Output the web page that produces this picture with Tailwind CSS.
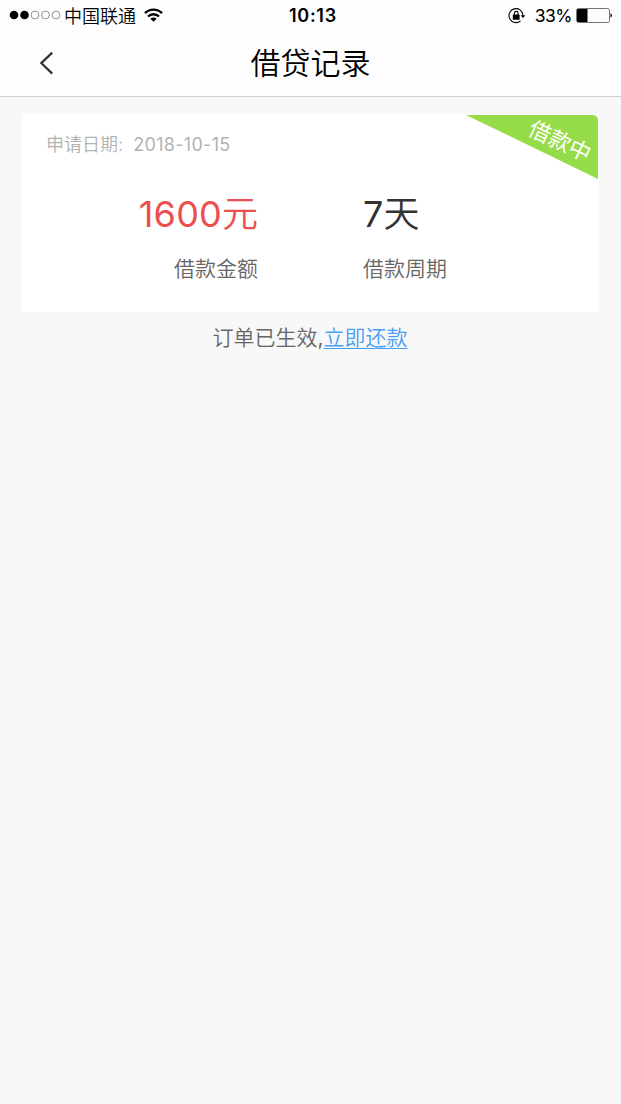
<!DOCTYPE html>
<html lang="zh-CN">
<head>
    <meta charset="UTF-8">
    <meta name="viewport" content="width=device-width, initial-scale=1.0">
    <title>借贷记录</title>
    <script src="https://cdn.jsdelivr.net/npm/@tailwindcss/browser@4"></script>
    <style>
        body { font-family: 'Inter', 'Noto Sans CJK SC', sans-serif; }
    </style>
</head>
<body class="bg-[#f8f8f8] min-h-screen overflow-hidden">

    <header class="h-[97px] bg-[#fdfdfd] border-b border-[#cfcfcf] text-black">
        <!-- Status bar -->
        <div class="relative h-8 flex items-center justify-between pl-[9px] pr-2">
            <div class="flex items-center">
                <svg class="w-[52px] h-[10px] -mt-0.5" viewBox="0 0 52 10" fill="none" stroke="#777" stroke-width="0.8">
                    <circle cx="5" cy="5" r="4.3" fill="#000" stroke="none"/>
                    <circle cx="15.5" cy="5" r="4.3" fill="#000" stroke="none"/>
                    <circle cx="26" cy="5" r="3.9"/>
                    <circle cx="36.5" cy="5" r="3.9"/>
                    <circle cx="47" cy="5" r="3.9"/>
                </svg>
                <span class="ml-[3px] mt-px text-[18px] leading-8 font-[350] whitespace-nowrap">中国联通</span>
                <svg class="ml-2 -mt-0.5 w-[19px] h-[14px]" viewBox="0 0 19 14" fill="none" stroke="#000" stroke-width="2.3">
                    <path d="M1 5.1a12 12 0 0 1 17 0"/>
                    <path d="M4 8.5a7.8 7.8 0 0 1 11 0"/>
                    <path d="M9.5 13.8 6.3 10.8a4.4 4.4 0 0 1 6.4 0z" fill="#000" stroke="none"/>
                </svg>
            </div>
            <span class="absolute left-[289px] top-0 text-[18px] leading-8 font-semibold tracking-[0.7px]">10:13</span>
            <div class="flex items-center">
                <svg class="-mt-px w-[18px] h-[16px]" viewBox="0 0 18 16" fill="none" stroke="#000" stroke-width="1.1">
                    <path d="M12.6 12.9A7 7 0 1 1 15 7.2"/>
                    <path d="M12.6 7.2h4.8L15 10.1z" fill="#000" stroke="none"/>
                    <rect x="4.8" y="6.6" width="6.8" height="5.2" rx="0.6" fill="#000" stroke="none"/>
                    <path d="M6.3 7.2V5.3a1.9 1.9 0 0 1 3.8 0v1.9"/>
                </svg>
                <span class="ml-[9px] text-[17.5px] leading-8 tracking-[-0.5px]">33%</span>
                <svg class="ml-1 -mt-px w-[37px] h-[15px]" viewBox="0 0 37 15">
                    <rect x="0.5" y="0.5" width="33" height="14" rx="2" fill="none" stroke="#666" stroke-width="0.9"/>
                    <path d="M2 1h9.5v13H2a1 1 0 0 1-1-1V2a1 1 0 0 1 1-1z" fill="#000"/>
                    <path d="M34.5 5.3a2.4 2.4 0 0 1 0 4.4z" fill="#000"/>
                </svg>
            </div>
        </div>
        <!-- Nav bar -->
        <div class="relative h-16 flex justify-center">
            <button class="absolute left-[39px] top-[19px]" aria-label="返回">
                <svg class="w-[15px] h-[24px]" viewBox="0 0 15 24" fill="none" stroke="#333" stroke-width="2.2">
                    <path d="M13.2 1.6 2.3 12.1 13.2 22.6"/>
                </svg>
            </button>
            <h1 class="text-[30px] leading-[62px] font-[350]">借贷记录</h1>
        </div>
    </header>

    <main class="pt-[17px] pl-[22px] pr-[22px]">
        <section class="relative h-[198px] bg-white pt-[19px]">
            <p class="pl-6 text-[18px] leading-6 text-[#b2b2b2] font-[350] whitespace-pre">申请日期:  <span class="font-normal tracking-[0.3px]">2018-10-15</span></p>

            <div class="mt-[31px] grid grid-cols-[236px_1fr] gap-x-[105px]">
                <div class="text-right">
                    <p class="text-[36px] leading-[52px] text-[#eb4f4f] font-[350]"><span class="font-normal tracking-[0.2px]">1600</span>元</p>
                    <p class="mt-[15px] text-[21px] leading-7 text-[#666] font-[350]">借款金额</p>
                </div>
                <div>
                    <p class="text-[36px] leading-[52px] text-[#333] font-[350]"><span class="font-normal">7</span>天</p>
                    <p class="mt-[15px] text-[21px] leading-7 text-[#666] font-[350]">借款周期</p>
                </div>
            </div>

            <!-- Corner ribbon -->
            <div class="absolute right-px top-px w-[132px] h-[64px]">
                <svg class="w-full h-full" viewBox="0 0 132 64">
                    <path d="M0 0h127a5 5 0 0 1 5 5v59z" fill="#96db48"/>
                </svg>
                <span class="absolute left-[61px] top-[11px] text-[22px] leading-[30px] text-white whitespace-nowrap rotate-[25deg]">借款中</span>
            </div>
        </section>

        <p class="mt-[11px] pr-px text-center text-[21px] leading-[30px] text-[#666] font-[350]">订单已生效<span class="font-normal">,</span><a href="#" class="text-[#4a9ff5] underline decoration-1 underline-offset-[3px]">立即还款</a></p>
    </main>

</body>
</html>
